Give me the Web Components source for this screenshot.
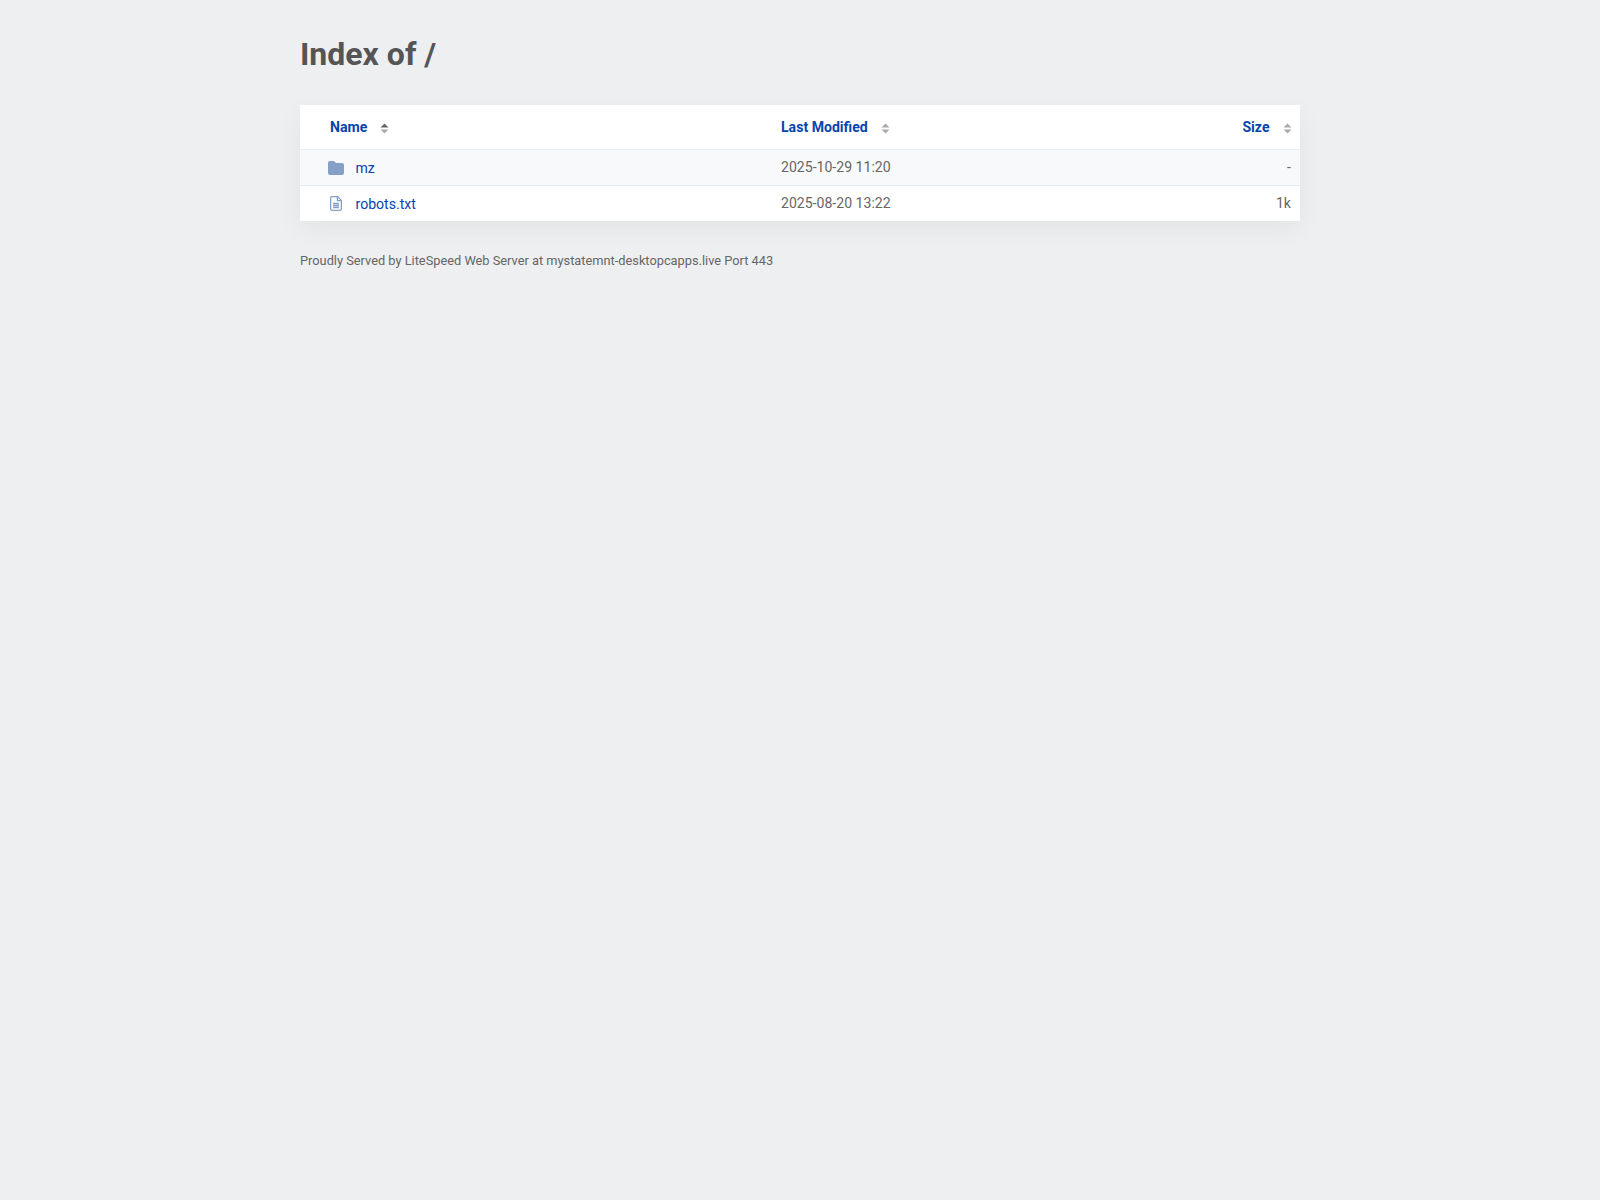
<!DOCTYPE html>
<html lang="en">
<head>
<meta charset="utf-8">
<title>Index of /</title>
<style>
  html, body { margin: 0; background: #eeeff1; }
  body { font-family: Roboto, sans-serif; color: #666; font-size: 14px; }
</style>
</head>
<body>
<dir-page>
  <span slot="title">Index of /</span>
  <dir-table>
    <dir-head>
      <sort-link active>Name</sort-link>
      <sort-link>Last Modified</sort-link>
      <sort-link>Size</sort-link>
    </dir-head>
    <dir-row type="folder" name="mz" modified="2025-10-29 11:20" size="-" striped></dir-row>
    <dir-row type="file" name="robots.txt" modified="2025-08-20 13:22" size="1k"></dir-row>
  </dir-table>
  <span slot="footer">Proudly Served by LiteSpeed Web Server at mystatemnt-desktopcapps.live Port 443</span>
</dir-page>

<script>
(function DirectoryListing() {

const COLUMNS = 'grid-template-columns: 481px 1fr 300px;';

class DirPage extends HTMLElement {
  connectedCallback() {
    this.attachShadow({mode: 'open'});
    this.shadowRoot.innerHTML = `
      <style>
        :host { display: block; width: 1000px; margin: 0 auto; padding-top: 34px; }
        h1 { margin: 0 0 30px; font-size: 32px; line-height: 41px; font-weight: 700; color: #555; }
        footer { margin-top: 31px; font-size: 12.8px; line-height: 18px; color: #666; }
      </style>
      <h1><slot name="title"></slot></h1>
      <slot></slot>
      <footer><slot name="footer"></slot></footer>`;
  }
}

class DirTable extends HTMLElement {
  connectedCallback() {
    this.attachShadow({mode: 'open'});
    this.shadowRoot.innerHTML = `
      <style>
        :host { display: block; background: #fff; box-shadow: 0 8px 24px rgba(0,0,0,.05); }
      </style>
      <slot></slot>`;
  }
}

class DirHead extends HTMLElement {
  connectedCallback() {
    this.attachShadow({mode: 'open'});
    this.shadowRoot.innerHTML = `
      <style>
        :host { display: grid; ${COLUMNS} height: 44px; border-bottom: 1px solid #e9ecef; align-items: center; }
        ::slotted(:first-child) { padding-left: 30px; }
        ::slotted(:last-child) { justify-self: end; padding-right: 8.5px; }
      </style>
      <slot></slot>`;
  }
}

class SortLink extends HTMLElement {
  connectedCallback() {
    const top = this.hasAttribute('active') ? '#666' : '#aaa';
    this.attachShadow({mode: 'open'});
    this.shadowRoot.innerHTML = `
      <style>
        :host { display: flex; align-items: center; gap: 13px; font-weight: 700; font-size: 14.08px; color: #0645ad; }
        svg { display: block; margin-top: 2px; }
      </style>
      <slot></slot>
      <svg width="9" height="11" viewBox="0 0 9 11">
        <path d="M4.5 0.5 L8.5 4.5 H0.5 Z" fill="${top}"/>
        <path d="M4.5 10.5 L8.5 6.5 H0.5 Z" fill="#aaa"/>
      </svg>`;
  }
}

const ICONS = {
  folder: `<svg width="16" height="14" viewBox="0 0 16 14"><path d="M2 0 H5.6 A1 1 0 0 1 6.3 .3 L8 2 H14 A2 2 0 0 1 16 4 V12 A2 2 0 0 1 14 14 H2 A2 2 0 0 1 0 12 V2 A2 2 0 0 1 2 0 Z" fill="#869fc7"/></svg>`,
  file: `<svg width="12" height="15" viewBox="0 0 12 15" fill="none" stroke="#869fc7" stroke-width="1.3"><path d="M2 .65 H7.6 L11.35 4.4 V13 A1.35 1.35 0 0 1 10 14.35 H2 A1.35 1.35 0 0 1 .65 13 V2 A1.35 1.35 0 0 1 2 .65 Z M7.4 .65 V4.6 H11.35 M3 7.5 H9 M3 9.5 H9 M3 11.5 H9"/></svg>`
};

class DirRow extends HTMLElement {
  connectedCallback() {
    this.attachShadow({mode: 'open'});
    const type = this.getAttribute('type');
    this.shadowRoot.innerHTML = `
      <style>
        :host { display: grid; ${COLUMNS} height: 35px; align-items: center; font-size: 14.08px; color: #666; }
        :host([striped]) { background: #f8f9fa; border-bottom: 1px solid #e9ecef; }
        .name { display: flex; align-items: center; color: #0645ad; }
        .icon { width: 55.5px; box-sizing: border-box; display: flex; justify-content: center; padding-left: 17px; }
        .date { padding-bottom: 2px; }
        .size { text-align: right; padding-right: 9px; padding-bottom: 2px; }
        svg { display: block; }
      </style>
      <div class="name"><span class="icon">${ICONS[type]}</span><span>${this.getAttribute('name')}</span></div>
      <div class="date">${this.getAttribute('modified')}</div>
      <div class="size">${this.getAttribute('size')}</div>`;
  }
}

customElements.define('dir-page', DirPage);
customElements.define('dir-table', DirTable);
customElements.define('dir-head', DirHead);
customElements.define('sort-link', SortLink);
customElements.define('dir-row', DirRow);

})();
</script>
</body>
</html>
